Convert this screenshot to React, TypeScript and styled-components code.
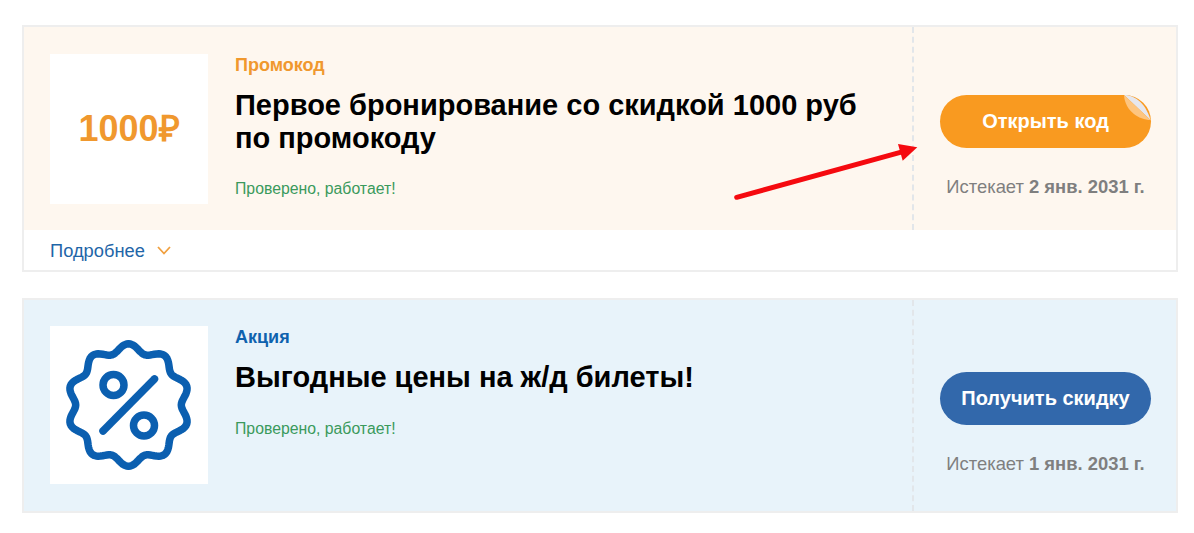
import styled, { createGlobalStyle } from 'styled-components';

const GlobalStyle = createGlobalStyle`
	html, body {
		margin: 0;
		padding: 0;
		background: #ffffff;
		font-family: 'Liberation Sans', Arial, sans-serif;
	}
`;

// wavy outline of the discount badge, 10 bumps around the centre
const badgePath = () => {
	const cx = 78.5;
	const cy = 79;
	const points: string[] = [];
	for (let i = 0; i < 200; i++) {
		const a = (i / 200) * Math.PI * 2;
		const r = 57 + 4.2 * Math.cos(a * 10);
		const x = cx + r * Math.sin(a);
		const y = cy - r * Math.cos(a);
		points.push(`${x.toFixed(2)} ${y.toFixed(2)}`);
	}
	return `M${points.join('L')}Z`;
};

function PercentBadge() {
	return (
		<svg width='158' height='158' viewBox='0 0 158 158' fill='none'>
			<g stroke='#0b5fb0' strokeWidth='7.5' strokeLinecap='round' strokeLinejoin='round'>
				<path d={badgePath()} />
				<circle cx='63.5' cy='59' r='10.5' />
				<circle cx='94' cy='99.5' r='10.5' />
				<path d='M104.5 53 L53 105' />
			</g>
		</svg>
	);
}

function Chevron() {
	return (
		<svg width='14' height='9' viewBox='0 0 14 9' fill='none'>
			<path d='M1 1 L7 7.500 L13 1' stroke='#f0a040' strokeWidth='1.8' />
		</svg>
	);
}

function Peel() {
	return (
		<PeelSvg width='30' height='30' viewBox='0 0 30 30' fill='none'>
			<path d='M3 0 C12 0 24 6 29.500 25 Z' fill='#e6e7ee' />
			<path d='M3 0 L29.500 25 C18 25 4 16 3 0 Z' fill='#fdc580' />
		</PeelSvg>
	);
}

function PromoArrow() {
	return (
		<ArrowSvg width='190' height='60' viewBox='0 0 190 60' fill='none'>
			<path d='M5.700 55.300 L172 9.700' stroke='#f50a0f' strokeWidth='5' strokeLinecap='round' />
			<path d='M167 2 L186.300 5.300 L171.700 18.700 Z' fill='#f50a0f' />
		</ArrowSvg>
	);
}

export default function App() {
	return (
		<Page>
			<GlobalStyle />
			<Card>
				<CardBody $tone='orange'>
					<Main $top={27} $bottom={26}>
						<Thumb $height={150}>
							<Amount>1000₽</Amount>
						</Thumb>
						<Info>
							<Kind $color='#f0982e'>Промокод</Kind>
							<Title>Первое бронирование со скидкой 1000 руб по промокоду</Title>
							<Checked>Проверено, работает!</Checked>
						</Info>
					</Main>
					<Side>
						<ActionButton $color='#f99a20'>
							Открыть код
							<Peel />
						</ActionButton>
						<Expires>
							Истекает <b>2 янв. 2031 г.</b>
						</Expires>
					</Side>
					<PromoArrow />
				</CardBody>
				<Footer>
					<MoreLink>Подробнее</MoreLink>
					<Chevron />
				</Footer>
			</Card>
			<Card>
				<CardBody $tone='blue'>
					<Main $top={26} $bottom={27}>
						<Thumb $height={158}>
							<PercentBadge />
						</Thumb>
						<Info>
							<Kind $color='#0e62ae'>Акция</Kind>
							<Title>Выгодные цены на ж/д билеты!</Title>
							<Checked>Проверено, работает!</Checked>
						</Info>
					</Main>
					<Side>
						<ActionButton $color='#3268ab'>Получить скидку</ActionButton>
						<Expires>
							Истекает <b>1 янв. 2031 г.</b>
						</Expires>
					</Side>
				</CardBody>
			</Card>
		</Page>
	);
}

const Page = styled.div`
	display: flex;
	flex-direction: column;
	gap: 26px;
	width: 1156px;
	padding: 25px 16px 20px 22px;
`;

const Card = styled.div`
	display: flex;
	flex-direction: column;
	border: 2px solid #eeeeee;
	background: #ffffff;
`;

const CardBody = styled.div<{ $tone: 'orange' | 'blue' }>`
	position: relative;
	display: flex;
	background: ${(props) => (props.$tone === 'orange' ? '#fef7ef' : '#e8f3fa')};
`;

const Main = styled.div<{ $top: number; $bottom: number }>`
	display: flex;
	flex: 1;
	gap: 27px;
	padding: ${(props) => props.$top}px 26px ${(props) => props.$bottom}px;
`;

const Thumb = styled.div<{ $height: number }>`
	display: flex;
	flex: none;
	align-items: center;
	justify-content: center;
	width: 158px;
	height: ${(props) => props.$height}px;
	background: #ffffff;
`;

const Amount = styled.span`
	margin-bottom: 3px;
	font-size: 36px;
	font-weight: 700;
	color: #f0982e;
`;

const Info = styled.div`
	display: flex;
	flex-direction: column;
	align-items: flex-start;
	padding-top: 1px;
`;

const Kind = styled.div<{ $color: string }>`
	font-size: 18px;
	font-weight: 700;
	line-height: 20px;
	color: ${(props) => props.$color};
`;

const Title = styled.div`
	margin-top: 14px;
	max-width: 650px;
	font-size: 29px;
	font-weight: 700;
	line-height: 32.500px;
	color: #000000;
`;

const Checked = styled.div`
	margin-top: 26px;
	font-size: 15.800px;
	line-height: 18px;
	color: #3a9a5c;
`;

const Side = styled.div`
	display: flex;
	flex: none;
	flex-direction: column;
	align-items: center;
	justify-content: center;
	gap: 29px;
	box-sizing: border-box;
	width: 264px;
	padding: 35px 0 0 1px;
	border-left: 2px dashed #e2e6ea;
`;

const ActionButton = styled.div<{ $color: string }>`
	position: relative;
	display: flex;
	align-items: center;
	justify-content: center;
	width: 211px;
	height: 53px;
	border-radius: 27px;
	font-size: 20px;
	font-weight: 700;
	color: #ffffff;
	background: ${(props) => props.$color};
`;

const PeelSvg = styled.svg`
	position: absolute;
	top: 0;
	right: 0;
`;

const ArrowSvg = styled.svg`
	position: absolute;
	top: 115px;
	left: 707px;
`;

const Expires = styled.div`
	font-size: 18.400px;
	line-height: 20px;
	color: #7f7f7f;

	b {
		font-weight: 700;
	}
`;

const Footer = styled.div`
	display: flex;
	align-items: center;
	gap: 12px;
	height: 40px;
	padding: 1px 0 0 26px;
	box-sizing: border-box;
`;

const MoreLink = styled.span`
	font-size: 18.300px;
	color: #1f66a8;
`;
